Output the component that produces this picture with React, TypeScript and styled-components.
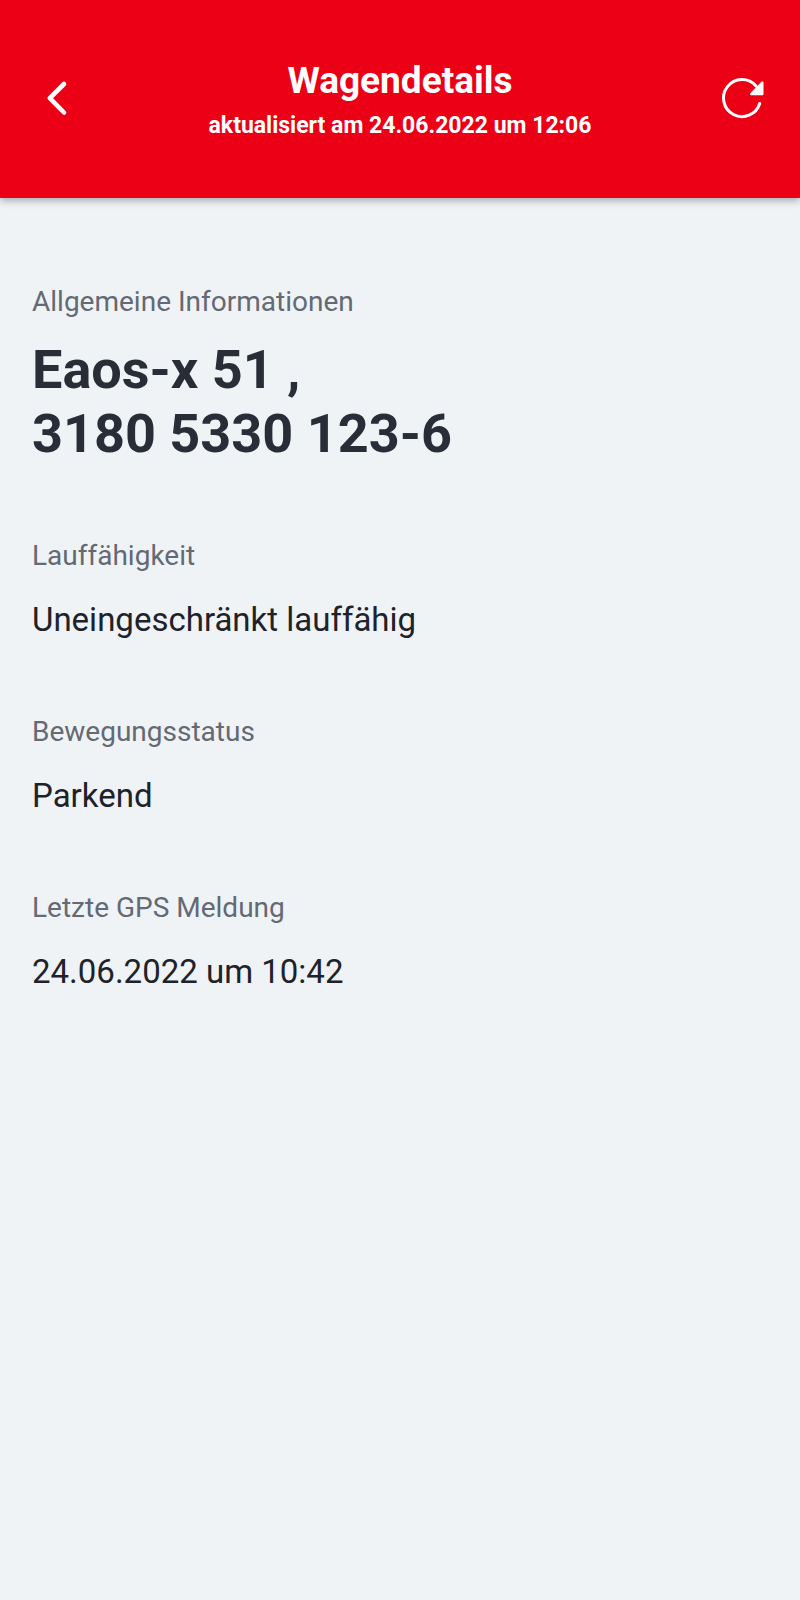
import React from "react";
import styled, { createGlobalStyle } from "styled-components";

const GlobalStyle = createGlobalStyle`
  *, *::before, *::after { box-sizing: border-box; }
  body {
    margin: 0;
    background: #eff3f6;
    color: #1e222a;
    font-family: Roboto, "Liberation Sans", sans-serif;
  }
`;

const Page = styled.div`
  min-height: 100vh;
  background: #eff3f6;
`;

const Header = styled.header`
  display: flex;
  align-items: center;
  justify-content: space-between;
  padding: 57px 32px 55px;
  background: #ec0016;
  color: #fff;
  box-shadow: 0 2px 8px rgba(0, 0, 0, 0.35);
`;

const HeaderText = styled.div`
  text-align: center;
`;

const Title = styled.h1`
  margin: 0;
  font-size: 37px;
  line-height: 48px;
  font-weight: 700;
`;

const Updated = styled.p`
  margin: 4px 0 0;
  font-size: 23px;
  line-height: 34px;
  font-weight: 700;
`;

const IconButton = styled.button`
  display: flex;
  align-items: center;
  justify-content: center;
  width: 48px;
  height: 48px;
  padding: 0;
  border: 0;
  background: none;
  color: inherit;
  cursor: pointer;
`;

const Details = styled.dl`
  display: flex;
  flex-direction: column;
  gap: 72px;
  margin: 0;
  padding: 86px 32px;
`;

const Label = styled.dt`
  font-size: 28px;
  line-height: 36px;
  color: #646973;
`;

const Value = styled.dd`
  margin: 24px 0 0;
  font-size: 33px;
  line-height: 44px;
`;

const WagonNumber = styled.dd`
  margin: 18px 0 0;
  font-size: 54px;
  line-height: 64px;
  font-weight: 700;
  color: #282d37;
`;

const fields = [
  { label: "Lauffähigkeit", value: "Uneingeschränkt lauffähig" },
  { label: "Bewegungsstatus", value: "Parkend" },
  { label: "Letzte GPS Meldung", value: "24.06.2022 um 10:42" },
];

export default function App() {
  return (
    <Page>
      <GlobalStyle />
      <Header>
        <IconButton type="button" aria-label="Zurück">
          <svg width="48" height="48" viewBox="0 0 48 48" fill="none" stroke="currentColor" strokeWidth="4.6" strokeLinecap="round" strokeLinejoin="round">
            <path d="M32 8 17.8 22.2l14.2 14.3" />
          </svg>
        </IconButton>
        <HeaderText>
          <Title>Wagendetails</Title>
          <Updated>aktualisiert am 24.06.2022 um 12:06</Updated>
        </HeaderText>
        <IconButton type="button" aria-label="Aktualisieren">
          <svg width="48" height="48" viewBox="0 0 48 48" fill="none" stroke="currentColor" strokeWidth="3" strokeLinecap="round" strokeLinejoin="round">
            <path d="M39.7 27.5A18.5 18.5 0 1 1 36 10" />
            <path d="M42.3 6.5V18H31.2Z" fill="currentColor" strokeWidth="2.4" />
          </svg>
        </IconButton>
      </Header>
      <Details>
        <div>
          <Label>Allgemeine Informationen</Label>
          <WagonNumber>
            Eaos-x 51 ,
            <br />
            3180 5330 123-6
          </WagonNumber>
        </div>
        {fields.map((field) => (
          <div key={field.label}>
            <Label>{field.label}</Label>
            <Value>{field.value}</Value>
          </div>
        ))}
      </Details>
    </Page>
  );
}
